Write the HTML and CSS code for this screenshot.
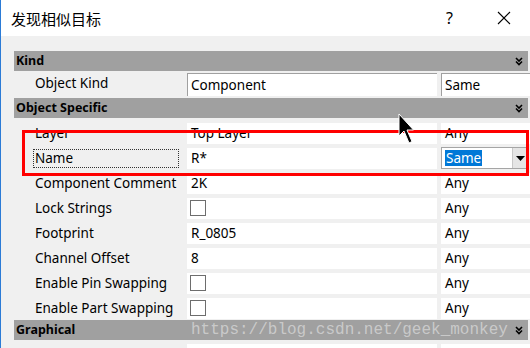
FILE: index.html
```html
<!DOCTYPE html>
<html lang="en">
<head>
    <meta charset="UTF-8">
    <title>发现相似目标</title>
    <link rel="stylesheet" href="styles.css">
</head>
<body>
    <div class="window">
        <div class="titlebar">
            <span class="title">发现相似目标</span>
            <span class="help">?</span>
            <svg class="close" width="14" height="14" viewBox="0 0 14 14">
                <path d="M1 1 L13 13 M13 1 L1 13" stroke="#000" stroke-width="1.1" fill="none"/>
            </svg>
        </div>

        <div class="content">
            <div class="grid">
                <div class="section">Kind
                    <svg class="fold" width="8" height="9" viewBox="0 0 8 9"><path d="M1 1 L4 4 L7 1 M1 4.5 L4 7.5 L7 4.5" stroke="#000" stroke-width="1.6" fill="none"/></svg>
                </div>
                <div class="row first">
                    <div class="label">Object Kind</div>
                    <div class="value sunken">Component</div>
                    <div class="mode sunken">Same</div>
                </div>

                <div class="section gap">Object Specific
                    <svg class="fold" width="8" height="9" viewBox="0 0 8 9"><path d="M1 1 L4 4 L7 1 M1 4.5 L4 7.5 L7 4.5" stroke="#000" stroke-width="1.6" fill="none"/></svg>
                </div>
                <div class="row">
                    <div class="label">Layer</div>
                    <div class="value">Top Layer</div>
                    <div class="mode">Any</div>
                </div>
                <div class="row">
                    <div class="label"><span class="focus">Name</span></div>
                    <div class="value">R*</div>
                    <div class="mode plain">
                        <div class="combo">
                            <span class="selected">Same</span>
                            <span class="drop"><svg width="9" height="5" viewBox="0 0 9 5"><path d="M0 0 H9 L4.5 5 Z" fill="#000"/></svg></span>
                        </div>
                    </div>
                </div>
                <div class="row">
                    <div class="label">Component Comment</div>
                    <div class="value">2K</div>
                    <div class="mode">Any</div>
                </div>
                <div class="row">
                    <div class="label">Lock Strings</div>
                    <div class="value"><span class="check"></span></div>
                    <div class="mode">Any</div>
                </div>
                <div class="row">
                    <div class="label">Footprint</div>
                    <div class="value">R_0805</div>
                    <div class="mode">Any</div>
                </div>
                <div class="row">
                    <div class="label">Channel Offset</div>
                    <div class="value">8</div>
                    <div class="mode">Any</div>
                </div>
                <div class="row">
                    <div class="label">Enable Pin Swapping</div>
                    <div class="value"><span class="check"></span></div>
                    <div class="mode">Any</div>
                </div>
                <div class="row">
                    <div class="label">Enable Part Swapping</div>
                    <div class="value"><span class="check"></span></div>
                    <div class="mode">Any</div>
                </div>

                <div class="section">Graphical
                    <svg class="fold" width="8" height="9" viewBox="0 0 8 9"><path d="M1 1 L4 4 L7 1 M1 4.5 L4 7.5 L7 4.5" stroke="#000" stroke-width="1.6" fill="none"/></svg>
                </div>
                <div class="row last">
                    <div class="label"></div>
                    <div class="value"></div>
                    <div class="mode"></div>
                </div>
            </div>

            <!-- things drawn over the dialog -->
            <div class="mark"></div>
            <div class="watermark">https://blog.csdn.net/geek_monkey</div>
            <svg class="cursor" width="18" height="32" viewBox="0 0 18 32">
                <path d="M1 1 L1 23 L6 18 L11 30 L14 28.5 L9 17 L15.5 17 Z" fill="#000" stroke="#fff" stroke-width="1"/>
            </svg>
        </div>
    </div>
</body>
</html>
```

FILE: styles.css
```css
* { box-sizing: border-box; }
body { margin: 0; padding: 0; width: 530px; height: 348px; overflow: hidden; background-color: #f0f0f0; font-family: "Noto Sans", "Noto Sans CJK SC", sans-serif; font-size: 13.5px; color: #000; }

.window { position: relative; width: 530px; height: 348px; overflow: hidden; border-left: 1px solid #2b7bd6; }

.titlebar { height: 36px; background-color: #fff; display: flex; align-items: center; padding-left: 10px; }
.title { font-family: "Noto Sans CJK SC", sans-serif; font-size: 15px; flex: 1; }
.help { font-size: 16px; margin-right: 44px; margin-top: -1px; }
.close { margin-right: 19px; }

.content { position: relative; padding: 15px 2px 0 13px; }

.section { position: relative; height: 20px; margin-bottom: 1px; background-color: #a0a0a0; font-size: 12.5px; font-weight: bold; line-height: 20px; padding-left: 2px; }
.section.gap { margin-bottom: 2px; }
.fold { position: absolute; right: 5px; top: 6px; }

.row { display: grid; grid-template-columns: 169px 250px 90px; column-gap: 4px; height: 25px; padding: 3px 0 1px 0; }
.row.first { height: 26px; padding: 1px 0 2px 0; }
.row.last { height: 7px; padding-bottom: 0; }
.label { padding-left: 21px; line-height: 21px; white-space: nowrap; }
.value, .mode { background-color: #fff; line-height: 21px; padding-left: 4px; }
.sunken { border-left: 1px solid #a0a0a0; border-top: 1px solid #a0a0a0; padding-left: 3px; line-height: 22px; }

.focus { display: inline-block; width: 146px; height: 19px; line-height: 17px; margin-left: -2px; padding-left: 1px; border: 1px dotted #333; }

.mode.plain { background-color: transparent; padding-left: 0; }
.combo { display: flex; align-items: center; height: 22px; margin-top: -1px; width: 88px; background-color: #fff; border: 1px solid #a5a5a5; padding-left: 3px; }
.selected { background-color: #0078d7; color: #fff; line-height: 16px; padding: 0 1px; flex: none; }
.drop { margin-left: auto; width: 16px; height: 20px; background-color: #e5e5e5; border-left: 1px solid #c8c8c8; display: flex; align-items: center; justify-content: center; }

.check { display: inline-block; width: 16px; height: 16px; margin-top: 2px; margin-left: -1px; vertical-align: top; border: 1px solid #6d6d6d; background-color: #fff; }

.mark { position: absolute; left: 21px; top: 94px; width: 507px; height: 46px; border: 3px solid #ff0000; }
.watermark { position: absolute; left: 190px; top: 285px; font-family: "Liberation Mono", monospace; font-size: 16px; color: rgba(255, 255, 255, 0.45); white-space: nowrap; }
.cursor { position: absolute; left: 397px; top: 77px; }
```
